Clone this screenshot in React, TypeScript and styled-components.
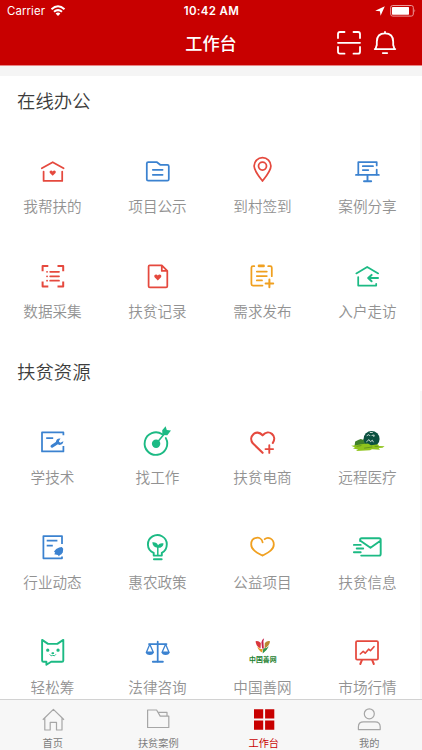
import { ReactNode } from "react";
import styled, { createGlobalStyle } from "styled-components";

const GlobalStyle = createGlobalStyle`
  * {
    box-sizing: border-box;
  }
  body {
    margin: 0;
    background: #fff;
    font-family: Inter, "Noto Sans CJK SC", sans-serif;
  }
`;

const Page = styled.div`
  width: 422px;
  height: 750px;
  display: flex;
  flex-direction: column;
  overflow: hidden;
`;

const Header = styled.header`
  height: 66px;
  flex-shrink: 0;
  background: #c80000;
  border-bottom: 1px solid #e88484;
  color: #fff;
`;

const StatusBar = styled.div`
  height: 22px;
  display: grid;
  grid-template-columns: 1fr auto 1fr;
  align-items: center;
  padding: 0 6px 0 7px;
  font-size: 11.4px;
`;

const StatusGroup = styled.div<{ $end?: boolean }>`
  display: flex;
  align-items: center;
  justify-content: ${(p) => (p.$end ? "flex-end" : "flex-start")};
  gap: 5px;
  letter-spacing: 0.1px;
`;

const Clock = styled.div`
  font-weight: 600;
  font-size: 11.5px;
  letter-spacing: 0.35px;
`;

const NavBar = styled.div`
  height: 43px;
  display: grid;
  grid-template-columns: 1fr auto 1fr;
  align-items: center;
  padding: 0 25px;
`;

const NavTitle = styled.h1`
  grid-column: 2;
  margin: 0;
  font-size: 17.2px;
  line-height: 24px;
  font-weight: 500;
`;

const NavActions = styled.div`
  display: flex;
  justify-content: flex-end;
  gap: 12px;
  padding-bottom: 1px;
`;

const Content = styled.main`
  flex: 1;
  min-height: 0;
  overflow: hidden;
  border-top: 10px solid #f5f5f5;
`;

const SectionTitle = styled.h2<{ $gap?: boolean }>`
  margin: 0;
  height: ${(p) => (p.$gap ? 61 : 44)}px;
  padding: ${(p) => (p.$gap ? 29 : 12)}px 17px 0;
  font-size: 18.4px;
  line-height: 26px;
  font-weight: 350;
  color: #3c3c3c;
`;

const Grid = styled.div`
  display: grid;
  grid-template-columns: repeat(4, 105px);
  grid-auto-rows: 105px;
  border-right: 2px solid #f8f8f8;
`;

const Cell = styled.div`
  display: flex;
  flex-direction: column;
  align-items: center;
  padding-top: 30px;
`;

const CellIcon = styled.svg`
  width: 41px;
  height: 40px;
  flex-shrink: 0;
  fill: none;
  stroke: currentColor;
  stroke-width: 1.75;
  stroke-linecap: round;
  stroke-linejoin: round;
`;

const CellLabel = styled.span`
  margin-top: 6px;
  font-size: 14.6px;
  line-height: 22px;
  font-weight: 350;
  color: #929292;
`;

const TabBar = styled.nav`
  height: 51px;
  flex-shrink: 0;
  display: grid;
  grid-template-columns: repeat(4, 1fr);
  background: #f7f7f7;
  border-top: 1px solid #d2d2d2;
`;

const Tab = styled.div<{ $active?: boolean }>`
  display: flex;
  flex-direction: column;
  align-items: center;
  padding-top: 6px;
  font-size: 10.2px;
  line-height: 14px;
  color: ${(p) => (p.$active ? "#c80000" : "#7d7d7d")};
`;

const TabIcon = styled.svg<{ $active?: boolean }>`
  width: 28px;
  height: 28px;
  margin-bottom: 2px;
  fill: none;
  stroke: ${(p) => (p.$active ? "none" : "#a6a6a6")};
  stroke-width: 1.2;
  stroke-linejoin: round;
`;

const LineIcon = styled.svg`
  fill: none;
  stroke: currentColor;
  stroke-width: 2;
  stroke-linecap: round;
  stroke-linejoin: round;
`;

const WifiIcon = styled(LineIcon)`
  stroke-linecap: butt;
`;

const RED = "#e5493e";
const BLUE = "#3b82d0";
const GREEN = "#1cba84";
const ORANGE = "#f0a020";

interface Item {
  label: string;
  color: string;
  icon: ReactNode;
}

const office: Item[] = [
  {
    label: "我帮扶的",
    color: RED,
    icon: (
      <>
        <path d="M9.8 18.3 20.7 12.2 31.6 18.3M11.6 21.6V30.9H30.2V21.6" />
        <path
          d="M20.7 25.8 17.9 23.1C16.6 21.1 19.3 19.6 20.7 21.4 22.1 19.6 24.8 21.1 23.5 23.1Z"
          fill="currentColor"
          stroke="none"
        />
      </>
    ),
  },
  {
    label: "项目公示",
    color: BLUE,
    icon: (
      <path d="M11.2 12.2H20L23.2 14.8H30.4Q31.8 14.8 31.8 16.2V29.3Q31.8 30.7 30.4 30.7H11.2Q9.8 30.7 9.8 29.3V13.6Q9.8 12.2 11.2 12.2ZM15.8 19.8H25.6M15.8 24.8H25.6" />
    ),
  },
  {
    label: "到村签到",
    color: RED,
    icon: (
      <>
        <path d="M20.5 31C16.8 26.2 12.1 20.7 12.1 16A8.4 8.4 0 0 1 28.9 16C28.9 20.7 24.2 26.2 20.5 31Z" />
        <circle cx="20.5" cy="16.1" r="4" />
      </>
    ),
  },
  {
    label: "案例分享",
    color: BLUE,
    icon: (
      <>
        <path d="M11.3 24.5V12H29.7V15.4M29.7 19.6V24.5M15.8 16.2H26M15.8 20.1H21.3" />
        <path d="M9 24.9H31.8M20.5 25V31M17 31.2H24.2" strokeWidth="1.9" />
      </>
    ),
  },
  {
    label: "数据采集",
    color: RED,
    icon: (
      <>
        <path
          d="M10.6 16.2V11H16.3M25.5 11H31.2V16.2M31.2 26.4V31.5H25.5M16.3 31.5H10.6V26.4"
          strokeWidth="2"
          strokeLinecap="butt"
        />
        <path d="M18.2 16.8H27M18.2 21.3H27M18.2 25.7H27M15 16.8H15.1M15 21.3H15.1M15 25.7H15.1" />
      </>
    ),
  },
  {
    label: "扶贫记录",
    color: RED,
    icon: (
      <>
        <path d="M12.7 10.4H24.8L30.3 15.9V31.2Q30.3 32.4 29.1 32.4H12.8Q11.6 32.4 11.6 31.2V11.6Q11.6 10.4 12.7 10.4ZM24.8 10.6V15.9H30.2" />
        <path
          d="M20.8 25.4 17.6 22.3C16.2 20 19.3 18.4 20.8 20.4 22.3 18.4 25.4 20 24 22.3Z"
          fill="currentColor"
          stroke="none"
        />
      </>
    ),
  },
  {
    label: "需求发布",
    color: ORANGE,
    icon: (
      <>
        <path d="M12.3 11.2H11Q9.4 11.2 9.4 12.8V29Q9.4 30.5 11 30.5H20.5M26.2 11.2H28.2Q29.8 11.2 29.8 12.8V21.2M14.8 16.5H24.8M14.8 21H24.8M14.8 25.4H20" />
        <path d="M17 10.9H21.6" strokeWidth="2.6" />
        <path d="M27.4 24.6V32.2M23.6 28.4H31.2" strokeWidth="2" />
      </>
    ),
  },
  {
    label: "入户走访",
    color: GREEN,
    icon: (
      <>
        <path d="M9.3 18.4 20.2 12 31.2 18.4M11.2 22V30.6H29.2V28.8" />
        <path d="M31 23H21.4M24.6 19.9 21.2 23 24.6 26.2" strokeWidth="2" />
      </>
    ),
  },
];

const resources: Item[] = [
  {
    label: "学技术",
    color: BLUE,
    icon: (
      <>
        <path
          d="M31.4 14.3V11.4H10V30.4H31.4V24.9M14.2 17H21.2"
          strokeLinecap="butt"
        />
        <path d="M20 25.2 25.8 21.4" strokeWidth="3" />
        <path
          d="M28.5 17.5 26.7 20.4 28.3 21.7 31.4 20.3C31.2 23.2 28.5 24.6 26.2 23.6L23.8 21.5C23.8 18.6 26 17 28.5 17.5Z"
          fill="currentColor"
          stroke="none"
        />
      </>
    ),
  },
  {
    label: "找工作",
    color: GREEN,
    icon: (
      <>
        <path d="M25.2 13.2A11.3 11.3 0 1 0 28.8 17.1" strokeWidth="1.9" />
        <circle cx="19.1" cy="22.8" r="4.2" fill="currentColor" stroke="none" />
        <path d="M19.1 22.8 28.5 11.5" strokeWidth="1.6" />
        <path
          d="M25.2 9.2 28.6 5.3 29.8 8.9 34 9.4 30.3 14.2 25.4 14Z"
          fill="currentColor"
          stroke="none"
        />
      </>
    ),
  },
  {
    label: "扶贫电商",
    color: RED,
    icon: (
      <>
        <path
          d="M20.6 31.8 10.8 22.3C5.7 15.8 14.2 7.1 20.6 14.3 27 7.1 35.5 15 30.8 22"
          strokeWidth="2.1"
        />
        <path d="M27.3 24.3V31.9M23.5 28.1H31.1" strokeWidth="1.9" />
      </>
    ),
  },
  {
    label: "远程医疗",
    color: "#0d5a40",
    icon: (
      <g stroke="none">
        <path
          d="M7.5 25 8.2 20.4 11.2 19 13.8 17.9 16 18.8 18 16.8 21 18 24 24.5Z"
          fill="#3f802b"
        />
        <circle cx="24.6" cy="17.9" r="8" fill="#0c5140" />
        <path
          d="M4.2 24.8 9 24.2 14 23.2 21 22.5 24 24.2 31 23.3 32 25 37.6 25.2 35.5 26.8 31.6 27 33 28.8 25 28.3 23 29.2 9 30 11 28.4 6 27.5 8 26.4Z"
          fill="#8fc41c"
        />
        <path
          d="M20 14.6 21.8 13.6 23 14.8M25 14.4 27.2 14 26.8 15.6M19.6 20.7 22 18.6 23.4 20.7 25.4 19.2 26.3 20.9M23.2 11.5H25.4"
          stroke="#dce8e2"
          strokeWidth="0.9"
        />
        <path
          d="M10 25.3 14 24.6M17.5 27.1 25 26M28 25.4H31"
          stroke="#5f8e20"
          strokeWidth="0.8"
        />
      </g>
    ),
  },
  {
    label: "行业动态",
    color: BLUE,
    icon: (
      <>
        <path
          d="M30 18V10H11.4V32.3H30V30.4M14.7 14.7H25.4M14.7 19.7H20.8"
          strokeLinecap="butt"
        />
        <path
          d="M27.2 21.6 29.8 20.9 31.2 22.8 30.8 26.5 29.2 28.6 27.8 29 27 30.5 25.9 29 22.2 28.2 23.2 26.8 22 25.4 24.2 22.9Z"
          fill="currentColor"
          stroke="none"
        />
      </>
    ),
  },
  {
    label: "惠农政策",
    color: GREEN,
    icon: (
      <>
        <path
          d="M16.7 29.6V26.8C9 23.8 9.4 13.9 15.5 10.4 21.7 6.7 29.8 11 29.8 18.2 29.8 22.3 27.7 25.3 24.8 26.8V29.6ZM16.9 33.2H24.7"
          strokeWidth="1.9"
        />
        <path d="M20.8 21V29" strokeWidth="1.5" strokeLinecap="butt" />
        <path
          d="M20.7 21.8C17.5 21.7 15.5 19.8 15.3 16.3 18.3 16 20.4 17.1 21 19.3 22.1 17.6 24 16.8 26.6 17.4 26.2 20.4 24.1 22 20.7 21.8Z"
          fill="currentColor"
          stroke="none"
        />
      </>
    ),
  },
  {
    label: "公益项目",
    color: ORANGE,
    icon: (
      <path
        d="M20.6 16.4C19.5 9.6 9.2 10.2 9.2 18.4 9.2 24 15.2 26.8 20.5 29.7 25.8 26.8 31.8 24 31.8 18.4 31.8 12.5 25.9 10.2 22.7 13.2"
        strokeWidth="1.8"
      />
    ),
  },
  {
    label: "扶贫信息",
    color: GREEN,
    icon: (
      <path
        d="M13.1 15.1V13.8Q13.1 12.2 14.7 12.2H32.1Q33.7 12.2 33.7 13.8V28Q33.7 29.6 32.1 29.6H14.2M13.4 14.7 23.5 21.8 33.4 14.7M6.9 18.9H13.7M9.7 22.5H16.2M6.9 26.2H13.7"
        strokeWidth="1.9"
      />
    ),
  },
  {
    label: "轻松筹",
    color: GREEN,
    icon: (
      <>
        <path
          d="M10.1 8.9 16 12.9H25.3L31.3 8.9V29.4Q31.3 30.8 29.9 30.8H19.2L14.4 33.7V30.8H11.5Q10.1 30.8 10.1 29.4Z"
          strokeWidth="1.9"
        />
        <path d="M15.7 19.2H15.8M26 19.2H26.1" strokeWidth="3.2" />
        <path d="M20.3 22.2H21.3" strokeWidth="1.7" />
        <path d="M17.9 23.7Q19.1 26 20.8 24.2 22.4 26 23.7 23.7" strokeWidth="1" />
      </>
    ),
  },
  {
    label: "法律咨询",
    color: BLUE,
    icon: (
      <>
        <path d="M20.7 10.6V30.5M12 13H29.5" />
        <path d="M15.9 30.7H25.8" strokeWidth="2" />
        <path
          d="M12.8 13.3 9.4 21.2H16.3ZM28.6 13.3 25.1 21.2H32Z"
          strokeWidth="1.3"
        />
        <path
          d="M8.7 21H16.9Q16.5 24 12.8 24 9 24 8.7 21ZM24.5 21H32.7Q32.4 24 28.6 24 24.9 24 24.5 21Z"
          fill="currentColor"
          stroke="none"
        />
      </>
    ),
  },
  {
    label: "中国善网",
    color: "#23812f",
    icon: (
      <g stroke="none">
        <path
          d="M13.6 10.2Q16.3 9.4 18.8 12L18.6 17.6Q13.6 14.8 13.6 10.2Z"
          fill="#d9363c"
        />
        <path
          d="M28 10.2Q25.1 9.5 22.8 12L22.6 17.6Q27.8 14.6 28 10.2Z"
          fill="#b98932"
        />
        <path
          d="M15.3 15.4Q18.2 18.6 20.7 18L20.3 21.4Q16.3 19.6 15.3 15.4Z"
          fill="#e69824"
        />
        <path
          d="M26.9 15.2Q24.6 20 20.7 22.4L21.3 17.6Q24.5 17.3 26.9 15.2Z"
          fill="#2f9449"
        />
        <path
          d="M19.4 11.2Q20 8 22.1 7.2L21.4 10.2 21.8 17.5H20.1Z"
          fill="#c52048"
        />
        <text
          x="20.8"
          y="31.3"
          textAnchor="middle"
          fontSize="6.9"
          fontWeight="700"
          fill="currentColor"
        >
          中国善网
        </text>
      </g>
    ),
  },
  {
    label: "市场行情",
    color: RED,
    icon: (
      <>
        <rect x="9" y="10" width="22" height="18.6" rx="1.2" />
        <path d="M14.9 29.2 13.3 33M25.2 29.2 26.8 33" strokeWidth="2" />
        <path
          d="M13.3 23 16.2 20.4 18.2 22.2 21.6 18.2 23.4 19.7 27 15.7"
          strokeWidth="1.6"
        />
      </>
    ),
  },
];

const tabs = [
  {
    label: "首页",
    icon: (
      <path d="M3.8 13.8 14.4 3.4 25 13.8M5.8 12.2V24H11.2V16.3H17.5V24H23V12.2" />
    ),
  },
  {
    label: "扶贫案例",
    icon: (
      <path d="M3.6 4H12.6L16.2 10.1H24.8V21.5H3.6ZM14.2 6.4H23V10" />
    ),
  },
  {
    label: "工作台",
    active: true,
    icon: (
      <path
        d="M4 3.2H13.2V12.6H4ZM15.1 3.2H24.3V12.6H15.1ZM4 14.5H13.2V23.8H4ZM15.1 14.5H24.3V23.8H15.1Z"
        fill="#c80000"
      />
    ),
  },
  {
    label: "我的",
    icon: (
      <>
        <circle cx="14.3" cy="7.8" r="5" />
        <path d="M3.4 23.6V20.8Q3.4 15.8 8.6 15.8H20Q25.2 15.8 25.2 20.8V23.6Z" />
      </>
    ),
  },
];

function ItemGrid({ items }: { items: Item[] }) {
  return (
    <Grid>
      {items.map((item) => (
        <Cell key={item.label}>
          <CellIcon viewBox="0 0 41 40" color={item.color}>
            {item.icon}
          </CellIcon>
          <CellLabel>{item.label}</CellLabel>
        </Cell>
      ))}
    </Grid>
  );
}

function App() {
  return (
    <>
      <GlobalStyle />
      <Page>
        <Header>
          <StatusBar>
            <StatusGroup>
              Carrier
              <WifiIcon width="16" height="12" viewBox="0 0 16 12">
                <path d="M1.5 4.2Q8-1.6 14.5 4.2M4 6.8Q8 3.4 12 6.8" />
                <path
                  d="M5.6 8.5Q8 6.6 10.4 8.5L8 11Z"
                  fill="currentColor"
                  stroke="none"
                />
              </WifiIcon>
            </StatusGroup>
            <Clock>10:42 AM</Clock>
            <StatusGroup $end>
              <svg width="10" height="10" viewBox="0 0 10 10" fill="#fff">
                <path d="M9.8.2 5.6 9.8 4.9 5.2.2 4.7Z" />
              </svg>
              <svg width="26" height="12" viewBox="0 0 26 12" fill="none">
                <rect
                  x="0.7"
                  y="0.5"
                  width="22.6"
                  height="10.6"
                  rx="2"
                  stroke="#eb9a9a"
                />
                <rect x="2" y="1.9" width="17" height="7.8" rx="0.6" fill="#fff" />
                <path d="M24.5 4V7.6Q26 5.8 24.5 4Z" fill="#eb9a9a" />
              </svg>
            </StatusGroup>
          </StatusBar>
          <NavBar>
            <NavTitle>工作台</NavTitle>
            <NavActions>
              <LineIcon width="24" height="24" viewBox="0 0 24 24">
                <path
                  d="M1 7V3Q1 1 3 1H7.5M16.5 1H21Q23 1 23 3V7M23 16V20.7Q23 22.7 21 22.7H16.5M7.5 22.7H3Q1 22.7 1 20.7V16M1 11.8H23"
                  strokeWidth="1.8"
                />
              </LineIcon>
              <LineIcon width="24" height="24" viewBox="0 0 24 24">
                <path
                  d="M3.8 14.2V10.7Q3.8 2.3 12 2.3T20.2 10.7V14.2M3.8 13.7 2.6 17.7M20.2 13.7 21.4 17.7M1.7 18.1H22.3M9.8 22.1H14.2M12 1V1.7"
                  strokeWidth="1.8"
                />
              </LineIcon>
            </NavActions>
          </NavBar>
        </Header>
        <Content>
          <SectionTitle>在线办公</SectionTitle>
          <ItemGrid items={office} />
          <SectionTitle $gap>扶贫资源</SectionTitle>
          <ItemGrid items={resources} />
        </Content>
        <TabBar>
          {tabs.map((tab) => (
            <Tab key={tab.label} $active={tab.active}>
              <TabIcon viewBox="0 0 28 28" $active={tab.active}>
                {tab.icon}
              </TabIcon>
              {tab.label}
            </Tab>
          ))}
        </TabBar>
      </Page>
    </>
  );
}

export default App;
